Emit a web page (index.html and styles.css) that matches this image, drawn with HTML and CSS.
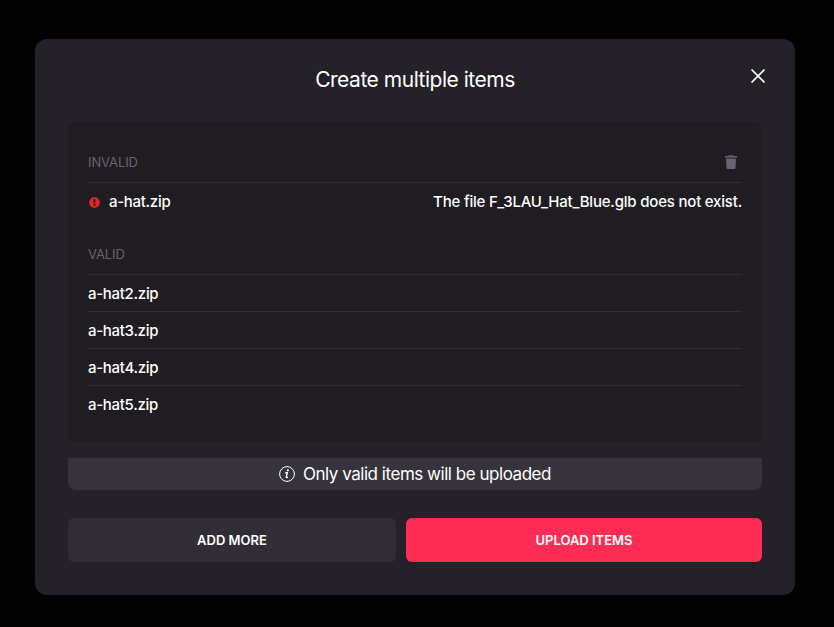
FILE: index.html
```html
<!DOCTYPE html>
<html lang="en">
<head>
<meta charset="utf-8">
<title>Create multiple items</title>
<link rel="stylesheet" href="styles.css">
</head>
<body>
<main class="modal">
  <header class="header">
    <h1 class="title">Create multiple items</h1>
    <button class="close" aria-label="Close"><svg width="16" height="16" viewBox="0 0 16 16"><path d="M1.5 1.5l13 13M14.5 1.5l-13 13" stroke="#fff" stroke-width="1.7" fill="none"/></svg></button>
  </header>
  <section class="files">
    <div class="section-head"><span>INVALID</span><svg class="trash" width="12" height="14" viewBox="0 0 12 14"><path fill="#676370" d="M0 1h3.3L4 .2h4l.7.8H12v1.6H0zM1 3.6h10l-.5 9.2c0 .8-.5 1.2-1.2 1.2H2.7c-.7 0-1.2-.4-1.2-1.2z"/></svg></div>
    <div class="row invalid"><svg class="alert" width="11" height="11" viewBox="0 0 11 11"><circle cx="5.5" cy="5.5" r="5.4" fill="#db2828"/><path d="M5.5 2v4.2M5.5 7.1v1.6" stroke="#1f1d22" stroke-width="1.7"/></svg><span class="name">a-hat.zip</span><span class="message">The file F_3LAU_Hat_Blue.glb does not exist.</span></div>
    <div class="section-head valid"><span>VALID</span></div>
    <div class="row">a-hat2.zip</div>
    <div class="row">a-hat3.zip</div>
    <div class="row">a-hat4.zip</div>
    <div class="row">a-hat5.zip</div>
  </section>
  <div class="notice"><svg width="16" height="16" viewBox="0 0 16 16"><circle cx="8" cy="8" r="7.4" fill="none" stroke="#fff" stroke-width="1"/><circle cx="8.8" cy="4.3" r="1.1" fill="#fff"/><path d="M6.2 6.8h2.1l-1 4.2c-.1.7.6.7 1.5-.1" stroke="#fff" stroke-width="1.4" fill="none"/></svg><span class="notice-text">Only valid items will be uploaded</span></div>
  <footer class="actions"><button class="button secondary">ADD MORE</button><button class="button primary">UPLOAD ITEMS</button></footer>
</main>
</body>
</html>
```

FILE: styles.css
```css
* { box-sizing: border-box; }
body { margin: 0; height: 627px; padding: 39px 39px 0 35px; background: #020202; color: #fff; font-family: Inter, sans-serif; overflow: hidden; }
.modal { width: 760px; height: 556px; padding: 0 33px; border-radius: 12px; background: #242129; }
.header { position: relative; height: 83px; padding-top: 27px; text-align: center; }
.title { margin: 0; font-size: 21px; line-height: 28px; font-weight: 400; letter-spacing: -0.48px; }
.close { position: absolute; top: 29px; right: -4px; width: 16px; height: 16px; padding: 0; border: 0; background: none; }
.close svg { display: block; }
.files { height: 320px; padding: 20px; border-radius: 8px; background: #1f1d21; font-size: 15px; }
.section-head { display: flex; align-items: center; justify-content: space-between; height: 41px; padding: 0 5px 0 0; border-bottom: 1px solid #302e34; color: #676370; font-size: 13px; letter-spacing: -0.1px; }
.row { display: flex; align-items: center; height: 37px; padding-top: 1px; border-bottom: 1px solid #302e34; font-weight: 450; line-height: 20px; letter-spacing: -0.3px; }
.row.invalid, .row:last-child { padding-top: 0; border-bottom: 0; }
.alert { margin: 1px 9px 0 1px; }
.message { margin-left: auto; letter-spacing: -0.2px; }
.valid { margin-top: 14px; }
.notice { display: flex; align-items: center; justify-content: center; gap: 8px; height: 32px; margin-top: 16px; border-radius: 0 0 8px 8px; background: #37333d; font-size: 17px; }
.notice-text { padding-bottom: 1px; letter-spacing: -0.47px; }
.actions { display: flex; gap: 10px; margin-top: 28px; }
.button { height: 44px; padding: 0; border: 0; border-radius: 6px; color: #fff; font: 600 13px Inter, sans-serif; }
.secondary { width: 328px; background: #302d36; }
.primary { width: 356px; background: #ff2d55; }
```
